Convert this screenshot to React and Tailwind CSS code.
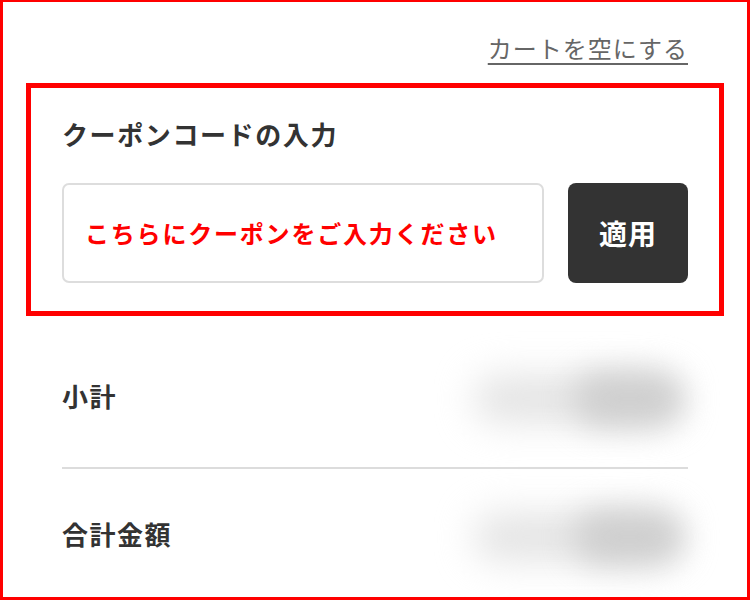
import React from "react";

const FONT = { fontFamily: '"Noto Sans CJK JP", "Noto Sans", sans-serif' };

const PriceBlur = () => {
    return (
        <div className="flex items-center" aria-hidden="true">
            <div className="w-[200px] h-[48px] rounded-full bg-[#e4e4e4] blur-[18px]" />
            <div className="-ml-[100px] w-[110px] h-[52px] rounded-full bg-[#cecece] blur-[16px]" />
        </div>
    );
};

const SummaryRow = ({ label }) => {
    return (
        <div className="flex items-center justify-between h-[136px]">
            <span className="mb-[8px] text-[26px] font-bold tracking-[1.5px] text-[#333]">{label}</span>
            <div className="pr-[4px]">
                <PriceBlur />
            </div>
        </div>
    );
};

export default function App() {
    return (
        <div
            className="w-[750px] h-[600px] overflow-hidden bg-white border-[3px] border-t-2 border-[#ff0000]"
            style={FONT}
        >
            <div className="px-[59px]">
                {/* EMPTY CART LINK */}
                <div className="flex justify-end pt-[31px]">
                    <a
                        href="#"
                        className="text-[24px] leading-[29px] tracking-[1px] text-[#666] underline decoration-2 underline-offset-[5px]"
                    >
                        カートを空にする
                    </a>
                </div>

                {/* COUPON */}
                <div className="-mx-[36px] mt-[21px] border-[5px] border-[#ff0000] px-[31px] pt-[29px] pb-[28px]">
                    <p className="text-[26px] leading-[34px] font-bold tracking-[1.6px] text-[#333]">
                        クーポンコードの入力
                    </p>
                    <div className="mt-[32px] flex gap-[24px]">
                        <div className="flex-1 h-[100px] flex items-center rounded-[7px] border-2 border-[#dddddd] px-[21px]">
                            <span className="text-[24px] font-bold tracking-[1.8px] text-[#ff0000]">
                                こちらにクーポンをご入力ください
                            </span>
                        </div>
                        <button className="w-[120px] h-[100px] rounded-[8px] bg-[#333] text-white text-[28px] font-bold tracking-[1px]">
                            適用
                        </button>
                    </div>
                </div>

                {/* SUMMARY */}
                <div className="mt-[15px]">
                    <SummaryRow label="小計" />
                    <div className="h-[2px] bg-[#dcdcdc]" />
                    <SummaryRow label="合計金額" />
                </div>
            </div>
        </div>
    );
}
